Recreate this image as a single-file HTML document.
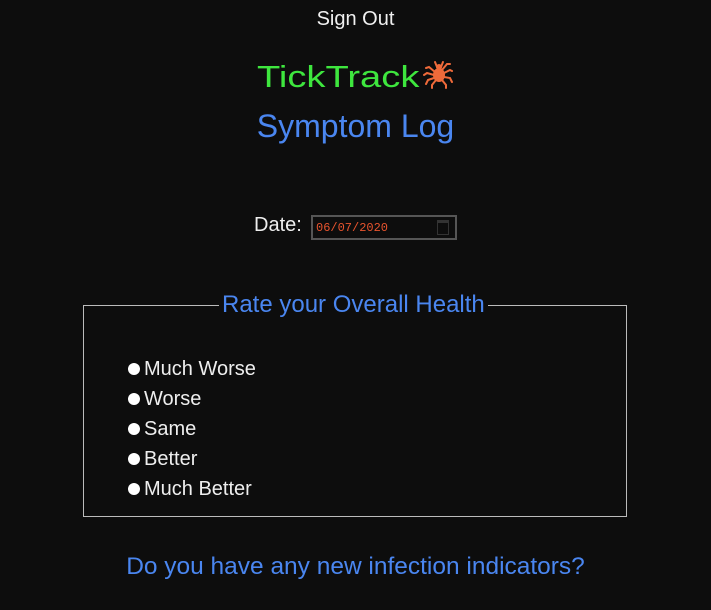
<!DOCTYPE html>
<html><head><meta charset="utf-8"><style>
html,body{margin:0;padding:0;background:#0d0d0d;width:711px;height:610px;overflow:hidden;font-family:"Liberation Sans",sans-serif;color:#eee}
.a{position:absolute;white-space:nowrap}
.c{left:0;width:711px;text-align:center}
</style></head><body>
<div class="a c" style="top:8px;font-size:20px;color:#f0f0f0">Sign Out</div>
<div class="a" style="left:257px;top:59px;font-size:31px;color:#3ee63e;transform:scaleX(1.23);transform-origin:left">TickTrack</div>
<svg class="a" style="left:423px;top:58px" width="30" height="32" viewBox="0 0 30 32">
<g stroke="#ef6a3a" stroke-width="2" fill="none" stroke-linecap="round">
<path d="M12 14 L6 9 L3 10 M11 17 L4 15 L1 17 M11 20 L5 22 L3 26 M13 22 L9 27 L9 30"/>
<path d="M19 12 L24 6 L27 6 M21 15 L27 12 L29 13 M21 19 L27 20 L29 24 M19 22 L23 27 L23 30"/>
<path d="M14 9 L12 4 M18 9 L20 4"/>
</g>
<ellipse cx="16" cy="17" rx="6" ry="7" fill="#ef6a3a"/>
<circle cx="16" cy="9" r="3" fill="#ef6a3a"/>
</svg>
<div class="a c" style="top:108px;font-size:32px;color:#4a86f0">Symptom Log</div>
<div class="a" style="left:254px;top:214px;font-size:20px;color:#eee">Date:</div>
<div class="a" style="left:311px;top:215px;width:142px;height:21px;border:2px solid #555;background:#0d0d0d"></div>
<div class="a" style="left:316px;top:221px;font-family:'Liberation Mono',monospace;font-size:12px;color:#e8542e">06/07/2020</div>
<div class="a" style="left:437px;top:220px;width:10px;height:11px;border:1px solid #333;border-top:3px solid #333"></div>
<div class="a" style="left:83px;top:305px;width:542px;height:210px;border:1px solid #bbb"></div>
<div class="a" style="left:219px;top:291px;padding:0 3px;background:#0d0d0d;font-size:24px;color:#4a86f0">Rate your Overall Health</div>
<div class="a" style="left:128px;top:354px;font-size:20px;line-height:30px;color:#eee">
<div><span style="display:inline-block;width:12px;height:12px;border-radius:50%;background:#fff;margin-right:4px"></span>Much Worse</div>
<div><span style="display:inline-block;width:12px;height:12px;border-radius:50%;background:#fff;margin-right:4px"></span>Worse</div>
<div><span style="display:inline-block;width:12px;height:12px;border-radius:50%;background:#fff;margin-right:4px"></span>Same</div>
<div><span style="display:inline-block;width:12px;height:12px;border-radius:50%;background:#fff;margin-right:4px"></span>Better</div>
<div><span style="display:inline-block;width:12px;height:12px;border-radius:50%;background:#fff;margin-right:4px"></span>Much Better</div>
</div>
<div class="a c" style="top:553px;font-size:24px;color:#4a86f0;transform:scaleX(1.02)">Do you have any new infection indicators?</div>
</body></html>
